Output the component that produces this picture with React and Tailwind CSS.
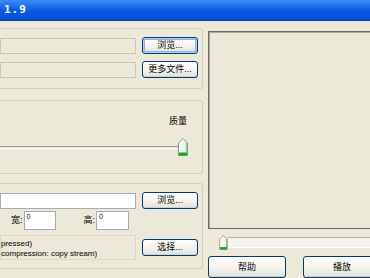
const cjk = "font-['Liberation_Sans','Noto_Sans_CJK_SC',sans-serif]";

function Btn({ children, className = "", focus = false }) {
  return (
    <div
      className={`flex items-center justify-center rounded-[3px] border border-[#003C74] bg-gradient-to-b from-white via-[#F5F4EF] to-[#E3E1D6] text-[9px] leading-none text-black ${cjk} ${focus ? "shadow-[inset_0_0_0_1px_#B6CEF5,inset_0_0_0_2px_#8DB2E3]" : "shadow-[inset_0_-1px_0_#D6D0C5]"} ${className}`}
    >
      {children}
    </div>
  );
}

function Thumb({ w = 10, h = 18 }) {
  return (
    <svg width={w} height={h} viewBox="0 0 10 18">
      <defs>
        <linearGradient id="tg" x1="0" y1="0" x2="1" y2="0">
          <stop offset="0" stopColor="#FFFFFF" />
          <stop offset="1" stopColor="#E6E6DE" />
        </linearGradient>
      </defs>
      <path d="M5 0.5 L9.5 5 V17.5 H0.5 V5 Z" fill="url(#tg)" stroke="#7E9E86" strokeWidth="1" />
      <rect x="1" y="14.5" width="8" height="3" fill="#21A121" />
      <rect x="8" y="5" width="1.5" height="10" fill="#5CC35C" opacity="0.7" />
    </svg>
  );
}

export default function App() {
  return (
    <div className="w-[370px] h-[278px] overflow-hidden bg-[#ECE9D8] flex flex-col font-['Liberation_Sans',sans-serif]">
      <div className="h-[21px] shrink-0 bg-gradient-to-b from-[#3D8BF7] via-[#0A5BE3] to-[#0350D6] border-b border-[#0A3EB0] flex items-center pl-[4px]">
        <span className="text-white font-bold text-[11px] tracking-[1px] font-['DejaVu_Sans_Mono',monospace]">1.9</span>
      </div>
      <div className="flex flex-1 min-h-0">
        {/* left column */}
        <div className="w-[203px] shrink-0 flex flex-col">
          <div className="mt-[7px] h-[61px] border-y border-r border-[#D0D0BF] rounded-r-[3px] flex flex-col pt-[8px] gap-[7px]">
            <div className="flex items-center h-[17px]">
              <div className="w-[136px] h-[16px] border border-[#C9C5B5] bg-[#ECE9D8]" />
              <Btn focus className="ml-[6px] w-[56px] h-[17px]">浏览...</Btn>
            </div>
            <div className="flex items-center h-[17px]">
              <div className="w-[136px] h-[16px] border border-[#C9C5B5] bg-[#ECE9D8]" />
              <Btn className="ml-[6px] w-[56px] h-[17px]">更多文件...</Btn>
            </div>
          </div>

          <div className="mt-[11px] h-[74px] border-y border-r border-[#D0D0BF] rounded-r-[3px] flex flex-col">
            <div className={`mt-[16px] pr-[15px] flex justify-end text-[9px] leading-none text-black ${cjk}`}>质量</div>
            <div className="mt-[12px] flex items-center h-[18px]">
              <div className="w-[180px] h-[3px] border-t border-[#9D9C99] border-b border-b-white bg-[#E1DFD3]" />
              <div className="-ml-[2px]">
                <Thumb />
              </div>
            </div>
          </div>

          <div className="mt-[9px] h-[86px] border-y border-r border-[#D0D0BF] rounded-r-[3px] flex flex-col pt-[8px]">
            <div className="flex items-center h-[17px]">
              <div className="w-[136px] h-[16px] border border-[#A5ACB2] bg-white" />
              <Btn className="ml-[6px] w-[56px] h-[17px]">浏览...</Btn>
            </div>
            <div className="mt-[2px] flex items-center h-[19px]">
              <span className={`ml-[11px] text-[9px] leading-none text-black ${cjk}`}>宽:</span>
              <div className="ml-[1px] w-[32px] h-[19px] border border-[#A5ACB2] bg-white text-[7px] leading-none pl-[2px] pt-[1px]">0</div>
              <span className={`ml-[28px] text-[9px] leading-none text-black ${cjk}`}>高:</span>
              <div className="ml-[1px] w-[33px] h-[19px] border border-[#A5ACB2] bg-white text-[7px] leading-none pl-[2px] pt-[1px]">0</div>
            </div>
            <div className="mt-[5px] flex items-center h-[25px]">
              <div className="w-[136px] h-[25px] border border-[#DCD8C8] bg-[#ECE9D8] overflow-hidden flex flex-col pt-[3px] text-[8px] leading-[10px] text-black">
                <span className="whitespace-nowrap -ml-[28px]">(Uncompressed)</span>
                <span className="whitespace-nowrap -ml-[15px]">(No compression: copy stream)</span>
              </div>
              <Btn className="ml-[6px] w-[56px] h-[17px]">选择...</Btn>
            </div>
          </div>
        </div>

        {/* right column */}
        <div className="ml-[5px] flex-1 flex flex-col">
          <div className="mt-[10px] h-[202px] border-y border-l border-[#6E6D65] bg-[#ECE9D8] shadow-[inset_1px_1px_0_#ACA899]" />
          <div className="mt-[5px] flex items-center h-[16px]">
            <div className="ml-[11px]">
              <Thumb w={9} h={15} />
            </div>
            <div className="flex-1 h-[11px] border-t border-[#B5B3A8] bg-[#F4F3EE] border-b border-b-white" />
          </div>
          <div className="mt-[6px] flex">
            <Btn className="w-[78px] h-[22px]">帮助</Btn>
            <Btn className="ml-[17px] w-[78px] h-[22px] shrink-0">播放</Btn>
          </div>
        </div>
      </div>
    </div>
  );
}
